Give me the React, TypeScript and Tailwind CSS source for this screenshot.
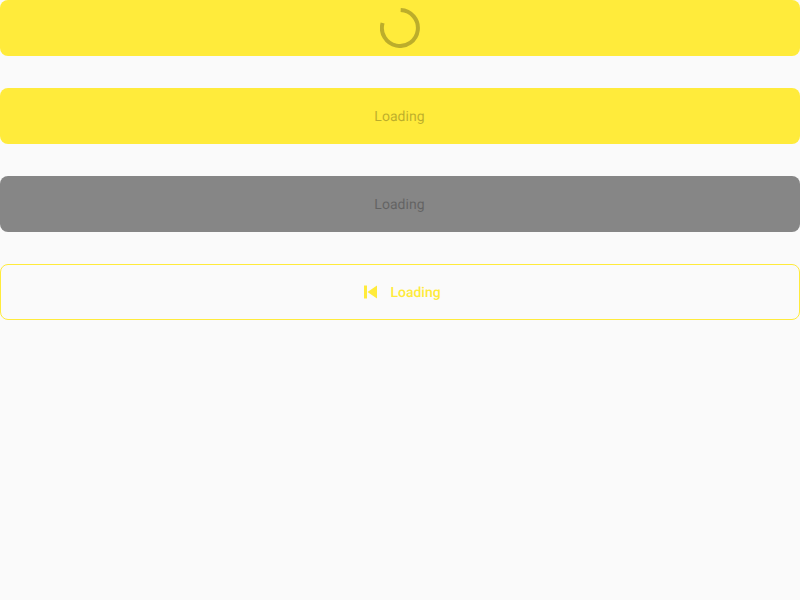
import React from "react";

const base =
  "flex h-14 w-full items-center justify-center rounded-lg text-sm font-normal [text-rendering:geometricPrecision]";

export default function App() {
  return (
    <div className="flex min-h-screen flex-col gap-8 bg-[#fafafa] font-['Roboto',sans-serif]">
      <button className={`${base} bg-[#ffeb3b]`}>
        <svg width="40" height="40" viewBox="0 0 40 40" fill="none" className="opacity-[0.26]">
          <path d="M20.7 2 A18 18 0 1 1 2.6 15" stroke="#000" strokeWidth="4" />
        </svg>
      </button>
      <button className={`${base} bg-[#ffeb3b] pr-px`}>
        <span className="pt-0.5 tracking-[0.04px] text-black opacity-[0.26]">Loading</span>
      </button>
      <button className={`${base} bg-[#868686] pr-px`}>
        <span className="pt-0.5 tracking-[0.04px] text-black opacity-[0.26]">Loading</span>
      </button>
      <button className={`${base} border border-[#ffeb3b] pr-px text-[#ffeb3b]`}>
        <svg width="24" height="24" viewBox="0 0 24 24" fill="currentColor" className="mr-2">
          <path d="M6 5.5h3v13h-3zM9.5 12l9.5 6.5v-13z" />
        </svg>
        <span className="pt-0.5 font-medium">Loading</span>
      </button>
    </div>
  );
}
